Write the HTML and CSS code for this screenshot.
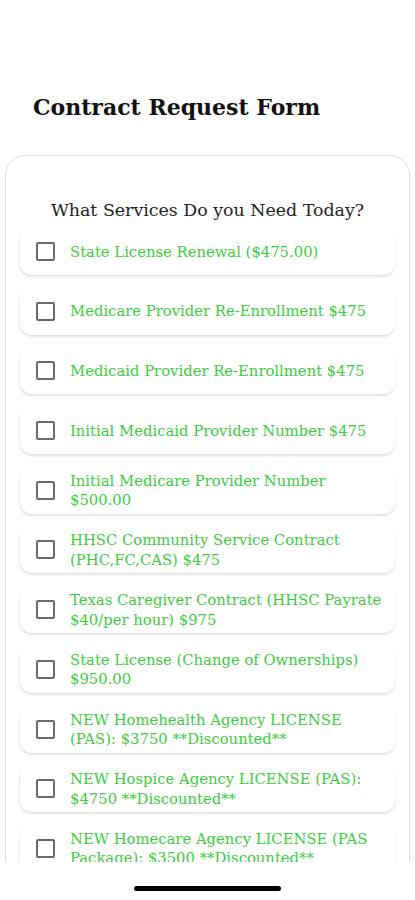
FILE: index.html
```html
<!DOCTYPE html>
<html>
<head>
    <meta charset="utf-8"/>
    <title>Contract Request Form</title>
    <link rel="stylesheet" href="styles.css">
</head>
<body>

<div id="screen">
    <div id="content">
        <h1>Contract Request Form</h1>

        <div class="card">
            <h2>What Services Do you Need Today?</h2>

            <ul class="services">
                <li><span class="box"></span><span class="label">State License Renewal ($475.00)</span></li>
                <li><span class="box"></span><span class="label">Medicare Provider Re-Enrollment $475</span></li>
                <li><span class="box"></span><span class="label">Medicaid Provider Re-Enrollment $475</span></li>
                <li><span class="box"></span><span class="label">Initial Medicaid Provider Number $475</span></li>
                <li><span class="box"></span><span class="label">Initial Medicare Provider Number<br/>$500.00</span></li>
                <li><span class="box"></span><span class="label">HHSC Community Service Contract<br/>(PHC,FC,CAS) $475</span></li>
                <li><span class="box"></span><span class="label">Texas Caregiver Contract (HHSC Payrate<br/>$40/per hour) $975</span></li>
                <li><span class="box"></span><span class="label">State License (Change of Ownerships)<br/>$950.00</span></li>
                <li><span class="box"></span><span class="label">NEW Homehealth Agency LICENSE<br/>(PAS): $3750 **Discounted**</span></li>
                <li><span class="box"></span><span class="label">NEW Hospice Agency LICENSE (PAS):<br/>$4750 **Discounted**</span></li>
                <li><span class="box"></span><span class="label">NEW Homecare Agency LICENSE (PAS<br/>Package): $3500 **Discounted**</span></li>
            </ul>
        </div>
    </div>

    <div id="homebar"><span class="indicator"></span></div>
</div>

</body>
</html>
```

FILE: styles.css
```css
body {
    margin: 0;
    background: #fff;
    font-family: "DejaVu Serif", Georgia, serif;
}

#screen {
    width: 415px;
    height: 900px;
    display: flex;
    flex-direction: column;
}

#content {
    height: 862px;
    overflow: hidden;
}

h1 {
    margin: 93px 0 0 33px;
    font-size: 22px;
    line-height: 28px;
    font-weight: bold;
    color: #111;
}

.card {
    margin: 34px 5px 0 5px;
    border: 1px solid #ddd;
    border-radius: 20px;
    padding: 43px 14px 0 14px;
}

h2 {
    margin: 0 0 7px 0;
    text-align: center;
    font-size: 17.4px;
    line-height: 22px;
    font-weight: normal;
    color: #222;
}

.services {
    list-style: none;
    margin: 0;
    padding: 0;
}

.services li {
    display: flex;
    align-items: center;
    gap: 15px;
    min-height: 47px;
    margin-bottom: 12.7px;
    padding-left: 16px;
    background: #fff;
    border-radius: 12px;
    box-shadow: 0 2px 3px rgba(0, 0, 0, 0.10), -1px 1px 2px rgba(0, 0, 0, 0.04);
}

.box {
    flex: none;
    width: 15px;
    height: 15px;
    border: 2px solid #6a6a6a;
    border-radius: 2px;
}

.label {
    font-size: 14.8px;
    line-height: 19.5px;
    color: #40cc40;
}

#homebar {
    flex: 1;
    display: flex;
    justify-content: center;
    align-items: flex-start;
    padding-top: 24px;
}

.indicator {
    width: 147px;
    height: 5px;
    border-radius: 3px;
    background: #000;
}
```
